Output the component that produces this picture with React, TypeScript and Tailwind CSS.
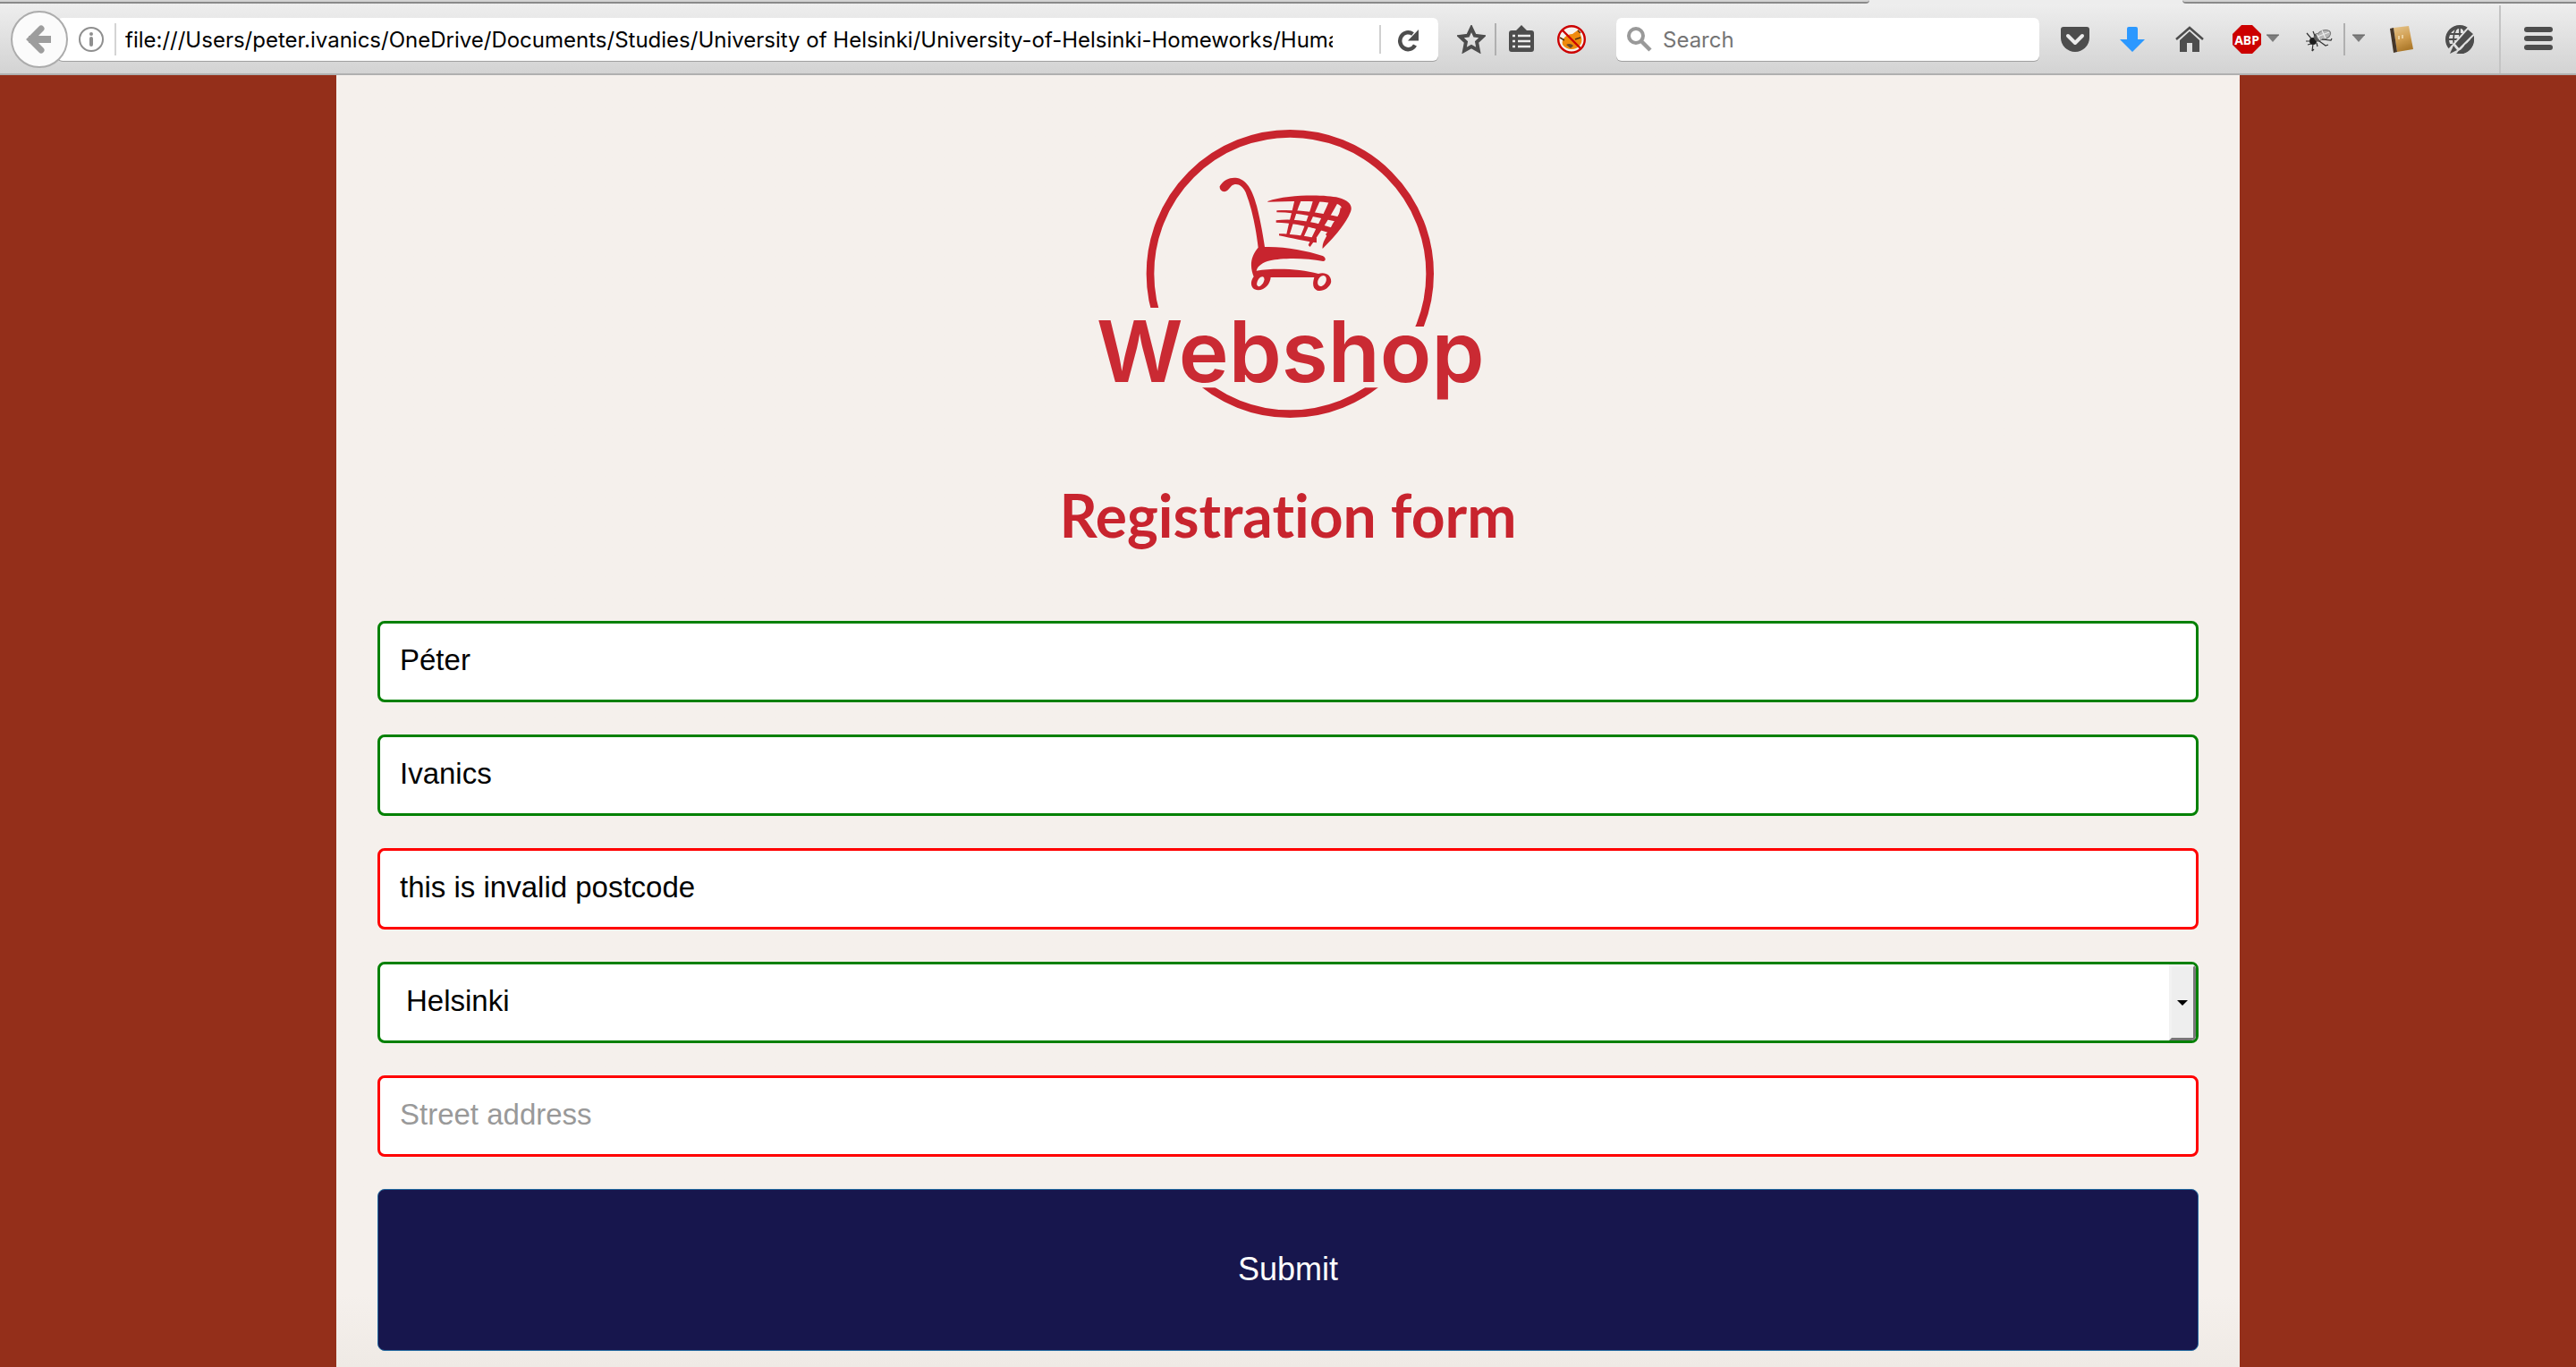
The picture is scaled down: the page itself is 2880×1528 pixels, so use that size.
import React from "react";

const RED = "#c8242e";

function Logo() {
  return (
    <svg viewBox="0 0 1440 1140" className="block h-[380px] w-[480px]" role="img" aria-label="Webshop">
      <clipPath id="ring">
        <path d="M0 0H1440V735H728V672H0zM0 940H1440V1140H0z" />
      </clipPath>
      <ellipse cx="727" cy="558" rx="469" ry="470" fill="none" stroke={RED} strokeWidth="26" clipPath="url(#ring)" />
      <g fill={RED}>
        <path d="M491 265 C505 240 530 233 550 237 C585 245 603 285 615 330 C630 390 636 430 642 468 C710 466 780 480 836 498 C848 504 848 514 838 516 C780 504 700 504 660 514 C635 520 618 532 614 548 C680 538 760 542 822 558 C850 550 868 568 864 588 C858 606 838 618 818 614 C802 608 802 590 808 570 L662 570 C660 592 644 612 620 613 C596 612 590 588 605 568 C594 540 590 505 620 470 C614 420 602 345 578 285 C565 258 545 252 530 264 C520 275 516 282 506 283 C496 282 490 274 491 265 Z" />
        <path d="M652 315 C720 292 840 292 890 303 C925 312 938 330 930 350 C912 395 870 440 836 474 C834 460 840 448 848 434 L870 390 L900 345 C902 325 885 322 860 320 C800 312 720 316 652 317 Z" />
      </g>
      <g fill="#f5f0ec">
        <ellipse cx="628" cy="584" rx="10" ry="18" transform="rotate(30 628 584)" />
        <ellipse cx="834" cy="582" rx="13" ry="19" transform="rotate(30 834 582)" />
      </g>
      <g fill={RED}>
        <path d="M682 346C750 342 820 352 896 368L888 384C830 374 760 352 682 352z" />
        <path d="M680 379C740 372 800 382 874 406L866 424C810 404 750 388 680 386z" />
        <path d="M690 424C730 424 770 432 816 438V454C780 450 730 438 690 430z" />
        <path d="M742 312H764C748 350 738 390 724 430H714C722 390 734 350 742 312z" />
        <path d="M804 312H828C812 350 790 396 772 436H760C778 394 794 350 804 312z" />
        <path d="M858 314L886 322C860 370 828 420 794 468L788 462C810 410 840 360 858 314z" />
        <path d="M896 336L924 350L858 440L846 426C870 400 892 370 896 336z" />
      </g>
      <text x="78" y="920" fontFamily="'Inter', sans-serif" fontWeight="600" fontSize="284" fill="#ca2a33">
        Webshop
      </text>
    </svg>
  );
}

function IconButton({ label, children }: { label: string; children: React.ReactNode }) {
  return (
    <button type="button" aria-label={label} className="size-8 shrink-0">
      <svg viewBox="0 0 32 32" className="block size-8" fill="#4d4d4d">
        {children}
      </svg>
    </button>
  );
}

function Caret({ label }: { label: string }) {
  return (
    <button type="button" aria-label={label} className="w-3.5 shrink-0">
      <svg viewBox="0 0 14 32" className="block h-8 w-3.5">
        <path d="M0 11h14l-7 8z" fill="#7d7d7d" />
        <path d="M0 11h14" stroke="#5e5e5e" />
      </svg>
    </button>
  );
}

function Toolbar() {
  return (
    <header className="shrink-0">
      <div className="flex h-1 bg-[#ededed]">
        <div className="flex-1 rounded-br-lg border-b-2 border-[#8a8a8a] bg-[#d2d2d2]" />
        <div className="w-[350px]" />
        <div className="w-[440px] rounded-bl-lg border-b-2 border-[#8a8a8a] bg-[#d2d2d2]" />
      </div>
      <div className="flex h-20 items-center border-b-2 border-[#b0b0b0] bg-linear-to-b from-[#eeeeee] to-[#d3d3d3] pt-0.5 pr-[26px] pl-3 font-['Inter',sans-serif] text-2xl">
        <button
          type="button"
          aria-label="Back"
          className="z-10 size-16 shrink-0 rounded-full border-2 border-[#acacac] bg-[#fbfbfb]"
        >
          <svg viewBox="0 0 60 60" className="block size-15" fill="none" stroke="#9d9d9d">
            <path d="M18 30h25" strokeWidth="8" />
            <path d="M32 18L20 30L32 42" strokeWidth="7" strokeLinecap="round" strokeLinejoin="miter" />
          </svg>
        </button>
        <div className="-ml-3 flex h-12 min-w-0 flex-1 items-center rounded-md bg-white pl-6 shadow-[0_1px_0_#a0a0a0]">
          <svg viewBox="0 0 28 28" className="size-7 shrink-0" fill="none" stroke="#8f8f8f">
            <circle cx="14" cy="14" r="13" strokeWidth="2" />
            <path d="M14 13v7" strokeWidth="4" strokeLinecap="round" />
            <circle cx="14" cy="8" r="2" fill="#8f8f8f" stroke="none" />
          </svg>
          <div className="ml-3 h-9 w-0.5 shrink-0 bg-[#d4d4d4]" />
          <input
            aria-label="Address"
            className="ml-2.5 min-w-0 flex-1 pt-0.5 outline-none"
            defaultValue="file:///Users/peter.ivanics/OneDrive/Documents/Studies/University of Helsinki/University-of-Helsinki-Homeworks/Human-Computer"
          />
          <div className="ml-[52px] h-8 w-0.5 shrink-0 bg-[#d0d0d0]" />
          <button type="button" aria-label="Reload" className="mr-5 ml-4 shrink-0">
            <svg viewBox="0 0 28 28" className="block size-7">
              <path d="M22 20.500A9 9.500 0 1 1 19.500 8" fill="none" stroke="#4d4d4d" strokeWidth="4.500" />
              <path d="M26 3v12.500H14z" fill="#4d4d4d" />
            </svg>
          </button>
        </div>
        <div className="flex shrink-0 items-center pr-[34px] pl-[21px]">
          <IconButton label="Bookmark this page">
            <path
              d="M16 3.500l3.800 8.200 8.900 1.100-6.600 6.200 1.800 9.500L16 24l-7.900 4.500L9.900 19 3.300 12.800l8.900-1.100z"
              fill="none"
              stroke="#4d4d4d"
              strokeWidth="4"
            />
          </IconButton>
          <div className="mr-3 ml-2.5 h-9 w-0.5 bg-[#b0b0b0]" />
          <IconButton label="Show bookmarks">
            <path d="M16 0l6 6h5a3 3 0 013 3v18a3 3 0 01-3 3H5a3 3 0 01-3-3V9a3 3 0 013-3h5z" />
            <g stroke="#ececec" strokeWidth="2.500">
              <path d="M6 12h3M12 12h14M6 18h3M12 18h14M6 24h3M12 24h14" />
            </g>
          </IconButton>
          <div className="w-6" />
          <IconButton label="FoxyProxy">
            <circle cx="16" cy="16" r="15" fill="#f5f2ee" />
            <path d="M6 22C4 15 11 10 17 10L24 5l2 6c2 4 2 9-1 12-4 5-14 6-19-1z" fill="#ef8a0c" />
            <path d="M10 22c3-2 6-1 8 1l-3 3z" fill="#6b4a2b" />
            <path d="M20 16l6-2M3 14l5 3M23 6l3 3" stroke="#553311" strokeWidth="1.500" />
            <circle cx="16" cy="16" r="14.800" fill="none" stroke="#cc0000" strokeWidth="2.400" />
            <path d="M5.500 5.500l21 21" stroke="#cc0000" strokeWidth="2.400" />
          </IconButton>
        </div>
        <div className="flex h-12 w-[473px] shrink-0 items-center rounded-md bg-white pl-3 shadow-[0_1px_0_#a0a0a0]">
          <svg viewBox="0 0 28 28" className="size-7 shrink-0" fill="none" stroke="#999999">
            <circle cx="10" cy="10" r="8" strokeWidth="4" />
            <path d="M15.500 15.500L26 26" strokeWidth="4.500" />
          </svg>
          <input
            type="search"
            aria-label="Search"
            placeholder="Search"
            className="ml-3 min-w-0 flex-1 pt-0.5 outline-none placeholder:text-[#757575]"
          />
        </div>
        <div className="flex shrink-0 items-center gap-8 pl-6">
          <IconButton label="Save to Pocket">
            <path d="M3 2h26a3 3 0 013 3v9a16 16 0 01-32 0V5a3 3 0 013-3z" />
            <path d="M8 12l8 8 8-8" fill="none" stroke="#ececec" strokeWidth="4" strokeLinecap="round" strokeLinejoin="round" />
          </IconButton>
          <IconButton label="Downloads">
            <path d="M12 2h8a2 2 0 012 2v12h8L16 30 2 16h8V4a2 2 0 012-2z" fill="#2b98ff" />
          </IconButton>
          <IconButton label="Home">
            <path d="M16 7l11 10v13h-8V20h-6v10H5V17z" />
            <path d="M1 16L16 3l15 13" fill="none" stroke="#4d4d4d" strokeWidth="2.500" />
          </IconButton>
        </div>
        <div className="ml-8 flex shrink-0 items-center gap-1.5">
          <IconButton label="Adblock Plus">
            <path d="M10 0h12l10 10v12L22 32H10L0 22V10z" fill="#cc0000" />
            <text
              x="16"
              y="22"
              fontFamily="'Noto Sans', sans-serif"
              fontSize="14"
              fontWeight="700"
              textAnchor="middle"
              fill="#ffffff"
            >
              ABP
            </text>
          </IconButton>
          <Caret label="Adblock Plus menu" />
        </div>
        <div className="ml-7 flex shrink-0 items-center">
          <IconButton label="Firebug">
            <ellipse cx="10" cy="18" rx="4" ry="4" fill="#1c1c1c" />
            <ellipse cx="15" cy="14" rx="4" ry="5" fill="#5c5c5c" transform="rotate(-35 15 14)" />
            <ellipse cx="22" cy="11" rx="8" ry="5" fill="#b5b5b5" stroke="#777777" transform="rotate(-20 22 11)" />
            <path d="M14 10l4 7M20 6l4 9M15 13l13-5" stroke="#ededed" strokeWidth="1.200" />
            <path
              d="M8 15L3 9M7 18l-5 0M8 21l-4 1M10 21l-1 8M9 29l2-2M14 20l1 4M17 18l7 5 3-1M20 16l10 1 1-2M12 12L10 7"
              fill="none"
              stroke="#333333"
              strokeWidth="1.200"
            />
          </IconButton>
          <div className="mr-2 ml-3 h-9 w-0.5 bg-[#b0b0b0]" />
          <Caret label="Firebug menu" />
        </div>
        <div className="ml-[26px] flex shrink-0 items-center gap-8">
          <IconButton label="Address book">
            <linearGradient id="cover" x1="0" y1="0" x2="0.3" y2="1">
              <stop offset="0" stopColor="#e6c58c" />
              <stop offset="0.6" stopColor="#cf9c4e" />
              <stop offset="1" stopColor="#ad7a2c" />
            </linearGradient>
            <path d="M6 3l17-2 5 26-18 3z" fill="url(#cover)" />
            <path d="M2 4l4-1 4 27-4 1z" fill="#453628" />
            <path d="M12 12v4M16 11v4" stroke="#f2dfb8" strokeWidth="1.500" />
          </IconButton>
          <IconButton label="Disable globe">
            <clipPath id="globe-sides">
              <path d="M0 0H27L3 27L0 32zM32 8V32H12L32 12z" />
            </clipPath>
            <g clipPath="url(#globe-sides)" fill="none" stroke="#4d4d4d">
              <circle cx="16" cy="16" r="14" strokeWidth="4" />
              <ellipse cx="16" cy="16" rx="7" ry="14" strokeWidth="1.800" />
              <path d="M16 2v14M2 16h16M4 10h20M5 22h6" strokeWidth="1.800" />
            </g>
            <path d="M32 12L13 32h7A16 16 0 0032 16z" />
            <path d="M25 4l7 6L15 27l-5-6z" stroke="#e2e2e2" strokeWidth="1.500" />
            <path d="M9 23l4 5-8 4z" />
          </IconButton>
        </div>
        <div className="mx-[26px] flex h-full shrink-0 pl-0.5">
          <div className="h-full w-0.5 bg-[#c4c4c4]" />
        </div>
        <IconButton label="Open menu">
          <rect y="2" width="32" height="6" rx="3" />
          <rect y="12" width="32" height="6" rx="3" />
          <rect y="22" width="32" height="6" rx="3" />
        </IconButton>
      </div>
    </header>
  );
}

export default function App() {
  return (
    <div className="flex min-h-screen flex-col bg-[#942f1a]">
      <Toolbar />
      <main className="mx-94 flex flex-1 flex-col items-center bg-[#f5f0ec] bg-linear-to-t from-[#efeae5] to-[#f5f0ec] to-[80px] px-[46px] pt-9 pb-4 font-['Liberation_Sans',Arial,sans-serif] text-[33px]">
        <Logo />
        <h1 className="mt-7 font-['Lato',sans-serif] text-[66px] leading-[96px] font-bold text-[#c8242e] [font-variant-ligatures:none]">
          Registration form
        </h1>
        <form className="mt-[70px] flex w-full flex-col gap-9 text-black" onSubmit={(e) => e.preventDefault()}>
          <input
            aria-label="First name"
            defaultValue="Péter"
            className="h-[91px] w-full rounded-lg border-3 border-[#008000] bg-white px-[22px] pb-1 outline-none"
          />
          <input
            aria-label="Last name"
            defaultValue="Ivanics"
            className="h-[91px] w-full rounded-lg border-3 border-[#008000] bg-white px-[22px] pb-1 outline-none"
          />
          <input
            aria-label="Postcode"
            aria-invalid="true"
            defaultValue="this is invalid postcode"
            className="h-[91px] w-full rounded-lg border-3 border-[#ff0000] bg-white px-[22px] pb-1 outline-none"
          />
          <div className="relative h-[91px] overflow-hidden rounded-lg border-3 border-[#008000] bg-white">
            <select
              aria-label="City"
              defaultValue="Helsinki"
              className="h-full w-full appearance-none pr-10 pb-1 pl-[29px] outline-none"
            >
              <option>Helsinki</option>
            </select>
            <div className="pointer-events-none absolute inset-y-0 right-0 flex w-[30px] items-center justify-center border-3 border-t-[#f2f2f2] border-r-[#777777] border-b-[#777777] border-l-[#f2f2f2] bg-[#eeeeee]">
              <svg viewBox="0 0 12 6" className="h-1.5 w-3">
                <path d="M0 0h12L6 6z" fill="#000000" />
              </svg>
            </div>
          </div>
          <input
            aria-label="Street address"
            aria-invalid="true"
            placeholder="Street address"
            className="h-[91px] w-full rounded-lg border-3 border-[#ff0000] bg-white px-[22px] pb-1 outline-none placeholder:text-[#999999]"
          />
          <button
            type="submit"
            className="h-[181px] w-full rounded-lg border border-[#22689f] bg-[#17164d] pb-0.5 text-4xl text-white"
          >
            Submit
          </button>
        </form>
      </main>
    </div>
  );
}
